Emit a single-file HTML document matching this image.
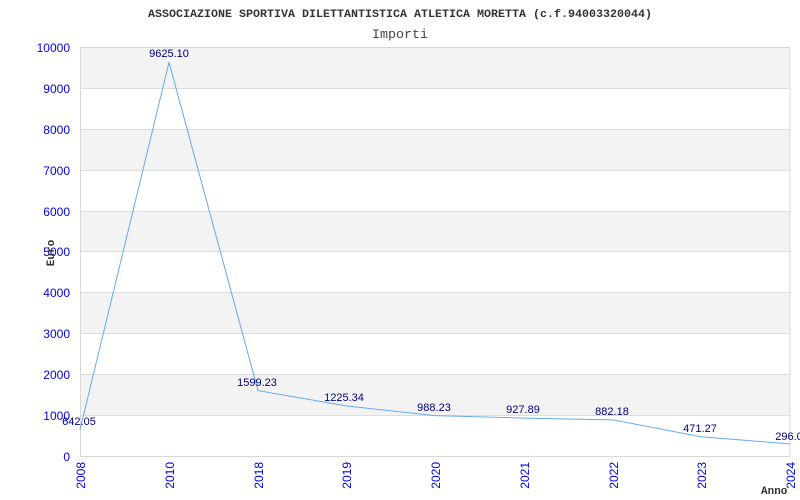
<!DOCTYPE html>
<html><head><style>body{margin:0;background:#fff}svg{display:block}</style></head><body>
<svg width="800" height="500" xmlns="http://www.w3.org/2000/svg" font-family="Liberation Sans, sans-serif">
<rect width="800" height="500" fill="#fff"/>
<g fill="#f3f3f3">
<rect x="80" y="47" width="710" height="41"/>
<rect x="80" y="129" width="710" height="41"/>
<rect x="80" y="211" width="710" height="41"/>
<rect x="80" y="292" width="710" height="41"/>
<rect x="80" y="374" width="710" height="41"/>
</g>
<g stroke="#dddddd" stroke-width="1">
<line x1="80" y1="88.5" x2="790" y2="88.5"/><line x1="80" y1="129.5" x2="790" y2="129.5"/>
<line x1="80" y1="170.5" x2="790" y2="170.5"/><line x1="80" y1="211.5" x2="790" y2="211.5"/>
<line x1="80" y1="251.5" x2="790" y2="251.5"/><line x1="80" y1="292.5" x2="790" y2="292.5"/>
<line x1="80" y1="333.5" x2="790" y2="333.5"/><line x1="80" y1="374.5" x2="790" y2="374.5"/>
<line x1="80" y1="415.5" x2="790" y2="415.5"/>
</g>
<rect x="80.5" y="47.5" width="709.5" height="409" fill="none" stroke="#d8d8d8"/>
<text x="400" y="17" text-anchor="middle" font-family="Liberation Mono, monospace" font-weight="bold" font-size="11" fill="#333" textLength="504" lengthAdjust="spacingAndGlyphs">ASSOCIAZIONE SPORTIVA DILETTANTISTICA ATLETICA MORETTA (c.f.94003320044)</text>
<text x="400" y="38" text-anchor="middle" font-family="Liberation Mono, monospace" font-size="13" fill="#444" textLength="56" lengthAdjust="spacingAndGlyphs">Importi</text>
<g fill="#0000ee" font-size="12" text-anchor="end">
<text x="70" y="52">10000</text><text x="70" y="93">9000</text><text x="70" y="134">8000</text>
<text x="70" y="175">7000</text><text x="70" y="216">6000</text><text x="70" y="256">5000</text>
<text x="70" y="297">4000</text><text x="70" y="338">3000</text><text x="70" y="379">2000</text>
<text x="70" y="420">1000</text><text x="70" y="461">0</text>
</g>
<text transform="translate(54,253) rotate(-90)" text-anchor="middle" font-family="Liberation Mono, monospace" font-weight="bold" font-size="11" fill="#333">Euro</text>
<g fill="#0000ee" font-size="12" text-anchor="end">
<text transform="translate(85,462) rotate(-90)">2008</text>
<text transform="translate(174,462) rotate(-90)">2010</text>
<text transform="translate(263,462) rotate(-90)">2018</text>
<text transform="translate(351,462) rotate(-90)">2019</text>
<text transform="translate(440,462) rotate(-90)">2020</text>
<text transform="translate(529,462) rotate(-90)">2021</text>
<text transform="translate(618,462) rotate(-90)">2022</text>
<text transform="translate(706,462) rotate(-90)">2023</text>
<text transform="translate(795,462) rotate(-90)">2024</text>
</g>
<text x="761" y="494" font-family="Liberation Mono, monospace" font-weight="bold" font-size="11" fill="#333">Anno</text>
<polyline fill="none" stroke="#66aaee" stroke-width="1" points="80,429.7 169,62.3 258,390.6 346,405.9 435,415.6 524,418.1 613,419.9 701,436.7 790,443.9"/>
<g fill="#000080" font-size="11" text-anchor="middle">
<text x="79" y="425">642.05</text>
<text x="169" y="57">9625.10</text>
<text x="257" y="386">1599.23</text>
<text x="344" y="401">1225.34</text>
<text x="434" y="411">988.23</text>
<text x="523" y="413">927.89</text>
<text x="612" y="415">882.18</text>
<text x="700" y="432">471.27</text>
<text x="789" y="440">296.0</text>
</g>
</svg>
</body></html>
